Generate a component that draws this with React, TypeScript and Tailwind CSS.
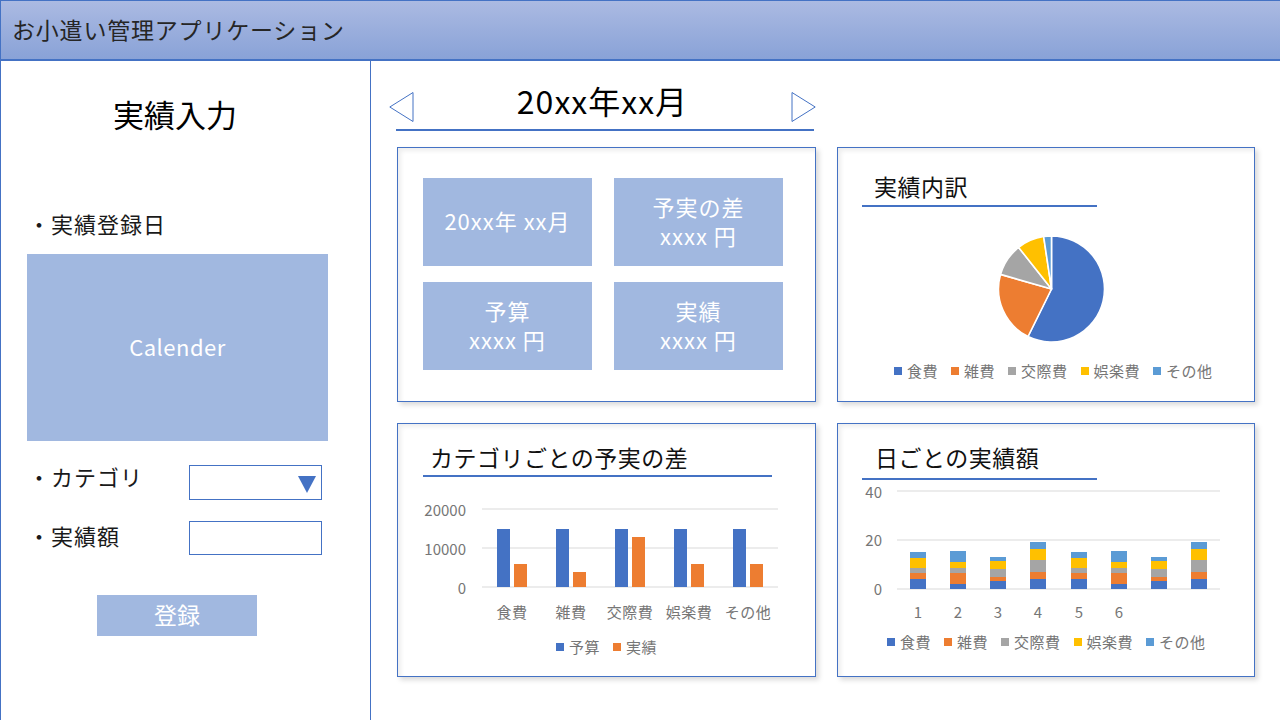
import type { ReactNode } from 'react';

const C = {
  blue: '#4472c4',
  orange: '#ed7d31',
  gray: '#a5a5a5',
  yellow: '#ffc000',
  sky: '#5b9bd5',
  axis: '#767676',
  grid: '#d9d9d9',
};

const CATS = ['食費', '雑費', '交際費', '娯楽費', 'その他'];

function slice(cx: number, cy: number, r: number, a0: number, a1: number) {
  const rad = (a: number) => ((a - 90) * Math.PI) / 180;
  const x0 = cx + r * Math.cos(rad(a0));
  const y0 = cy + r * Math.sin(rad(a0));
  const x1 = cx + r * Math.cos(rad(a1));
  const y1 = cy + r * Math.sin(rad(a1));
  const large = a1 - a0 > 180 ? 1 : 0;
  return `M ${cx} ${cy} L ${x0} ${y0} A ${r} ${r} 0 ${large} 1 ${x1} ${y1} Z`;
}

function Legend({ items, className }: { items: { label: string; color: string }[]; className: string }) {
  return (
    <div className={`flex h-[20px] items-center gap-[13px] text-[15px] leading-[20px] tracking-[0.5px] text-[#767676] ${className}`}>
      {items.map((it) => (
        <div key={it.label} className="flex items-center gap-[5px]">
          <span className="block h-[8px] w-[8px]" style={{ backgroundColor: it.color }} />
          <span>{it.label}</span>
        </div>
      ))}
    </div>
  );
}

function Card({ children, className = '' }: { children: ReactNode; className?: string }) {
  return (
    <div
      className={`border border-[#4472c4] bg-white shadow-[inset_3px_3px_4px_rgba(0,0,0,0.07),3px_3px_5px_rgba(0,0,0,0.15)] ${className}`}
    >
      {children}
    </div>
  );
}

function CardTitle({ text, ml, pl, width, gap }: { text: string; ml: string; pl: string; width: string; gap: string }) {
  return (
    <div className={`${ml} ${width}`}>
      <div className={`h-[30px] text-[23px] leading-[30px] tracking-[0.5px] text-[#111] ${pl}`}>{text}</div>
      <div className={`h-[2px] bg-[#4472c4] ${gap}`} />
    </div>
  );
}

function Tile({ lines }: { lines: string[] }) {
  return (
    <div className="flex h-[88px] w-[169px] flex-col items-center justify-center pb-[3px] text-[22px] leading-[29px] tracking-[1px] text-white bg-[#a1b8e0]">
      {lines.map((l) => (
        <span key={l}>{l}</span>
      ))}
    </div>
  );
}

function SummaryCard() {
  return (
    <Card className="pl-[25px] pt-[30px]">
      <div className="grid grid-cols-[169px_169px] gap-x-[22px] gap-y-[16px]">
        <Tile lines={['20xx年 xx月']} />
        <Tile lines={['予実の差', 'xxxx 円']} />
        <Tile lines={['予算', 'xxxx 円']} />
        <Tile lines={['実績', 'xxxx 円']} />
      </div>
    </Card>
  );
}

function PieCard() {
  const cx = 1051.5;
  const cy = 290;
  const r = 53;
  const parts = [
    { a0: 0, a1: 206.3, color: C.blue },
    { a0: 206.3, a1: 286, color: C.orange },
    { a0: 286, a1: 321.7, color: C.gray },
    { a0: 321.7, a1: 351.5, color: C.yellow },
    { a0: 351.5, a1: 360, color: C.sky },
  ];
  return (
    <Card className="pt-[23px]">
      <CardTitle text="実績内訳" ml="ml-[24px]" pl="pl-[12px]" width="w-[235px]" gap="mt-[4px]" />
      <svg width="416" height="112" className="mt-[26px] block">
        <g transform="translate(-838,-234)">
          {parts.map((p) => (
            <path key={p.color} d={slice(cx, cy, r, p.a0, p.a1)} fill={p.color} stroke="#fff" strokeWidth="1.6" strokeLinejoin="round" />
          ))}
        </g>
      </svg>
      <Legend
        className="mt-[16px] pl-[56px]"
        items={[
          { label: '食費', color: C.blue },
          { label: '雑費', color: C.orange },
          { label: '交際費', color: C.gray },
          { label: '娯楽費', color: C.yellow },
          { label: 'その他', color: C.sky },
        ]}
      />
    </Card>
  );
}

function DiffCard() {
  const actual = [565, 573, 538, 565, 565];
  return (
    <Card className="pt-[18px]">
      <CardTitle text="カテゴリごとの予実の差" ml="ml-[25px]" pl="pl-[7px]" width="w-[349px]" gap="mt-[3px]" />
      <svg width="416" height="130" className="mt-[17px] block">
        <g transform="translate(-398,-495)" fontSize="15" fill={C.axis}>
          {[510, 549, 588].map((y) => (
            <line key={y} x1="482" x2="778" y1={y} y2={y} stroke={C.grid} strokeWidth="1" />
          ))}
          {[
            ['20000', 510],
            ['10000', 549],
            ['0', 588],
          ].map(([t, y]) => (
            <text key={t} x="466" y={y} textAnchor="end" dominantBaseline="central">
              {t}
            </text>
          ))}
          {CATS.map((c, i) => {
            const x = 497 + 59 * i;
            return (
              <g key={c}>
                <rect x={x} y={530} width="13" height={588 - 530} fill={C.blue} />
                <rect x={x + 17} y={actual[i]} width="13" height={588 - actual[i]} fill={C.orange} />
                <text x={x + 15} y="612" textAnchor="middle" dominantBaseline="central" letterSpacing="0.5">
                  {c}
                </text>
              </g>
            );
          })}
        </g>
      </svg>
      <Legend
        className="mt-[13px] pl-[158px]"
        items={[
          { label: '予算', color: C.blue },
          { label: '実績', color: C.orange },
        ]}
      />
    </Card>
  );
}

function DailyCard() {
  const xs = [910, 950, 990, 1030, 1071, 1111, 1151, 1191];
  const patterns = [
    [10, 6, 5, 10, 6],
    [5, 11, 5, 6, 11],
    [8, 4, 8, 8, 4],
    [10, 7, 12, 11, 7],
  ];
  const colors = [C.blue, C.orange, C.gray, C.yellow, C.sky];
  return (
    <Card className="pt-[18px]">
      <CardTitle text="日ごとの実績額" ml="ml-[24px]" pl="pl-[13px]" width="w-[235px]" gap="mt-[6px]" />
      <svg width="416" height="143" className="mt-[1px] block">
        <g transform="translate(-838,-482)" fontSize="15" fill={C.axis}>
          {[492, 541, 590].map((y) => (
            <line key={y} x1="897" x2="1220" y1={y} y2={y} stroke={C.grid} strokeWidth="1" />
          ))}
          {[
            ['40', 492],
            ['20', 540],
            ['0', 589],
          ].map(([t, y]) => (
            <text key={t} x="882" y={y} textAnchor="end" dominantBaseline="central">
              {t}
            </text>
          ))}
          {xs.map((x, i) => {
            let top = 590;
            return (
              <g key={x}>
                {patterns[i % 4].map((h, j) => {
                  top -= h;
                  return <rect key={j} x={x} y={top} width="16" height={h} fill={colors[j]} />;
                })}
                {i < 6 && (
                  <text x={x + 8} y="612" textAnchor="middle" dominantBaseline="central">
                    {i + 1}
                  </text>
                )}
              </g>
            );
          })}
        </g>
      </svg>
      <Legend
        className="mt-[8px] pl-[49px]"
        items={[
          { label: '食費', color: C.blue },
          { label: '雑費', color: C.orange },
          { label: '交際費', color: C.gray },
          { label: '娯楽費', color: C.yellow },
          { label: 'その他', color: C.sky },
        ]}
      />
    </Card>
  );
}

function Sidebar() {
  return (
    <aside className="flex w-[371px] flex-col border-x border-[#4472c4] pl-[26px] text-[#1a1a1a]">
      <h2 className="ml-[86px] mt-[33px] h-[40px] text-[31px] leading-[40px] text-black">実績入力</h2>
      <div className="ml-[1px] mt-[74px] h-[30px] text-[22px] leading-[30px] tracking-[1px]">・実績登録日</div>
      <div className="mt-[16px] flex h-[187px] w-[301px] items-center justify-center pb-[2px] text-[22px] tracking-[0.5px] text-white bg-[#a1b8e0]">
        Calender
      </div>
      <div className="mt-[24px] flex items-start">
        <div className="ml-[1px] w-[161px] text-[22px] leading-[22px] tracking-[1px]">・カテゴリ</div>
        <div className="flex h-[35px] w-[133px] items-start justify-end border border-[#4472c4] pr-[5px] pt-[10px]">
          <svg width="18" height="17" viewBox="0 0 18 17">
            <polygon points="0,0 18,0 9,17" fill="#4472c4" />
          </svg>
        </div>
      </div>
      <div className="mt-[21px] flex items-start">
        <div className="ml-[1px] w-[161px] text-[22px] leading-[28px] tracking-[1px]">・実績額</div>
        <div className="h-[34px] w-[133px] border border-[#4472c4]" />
      </div>
      <button className="ml-[70px] mt-[40px] flex h-[41px] w-[160px] items-center justify-center pb-[3px] text-[23px] text-white bg-[#a1b8e0]">
        登録
      </button>
    </aside>
  );
}

function Arrow({ dir }: { dir: 'left' | 'right' }) {
  return (
    <svg width="25" height="30" viewBox="0 0 25 30">
      <polygon
        points={dir === 'left' ? '24,0.5 24,29.5 0.8,15' : '1,0.5 1,29.5 24.2,15'}
        fill="#fff"
        stroke="#4472c4"
        strokeWidth="1"
      />
    </svg>
  );
}

export default function App() {
  return (
    <div className="flex h-[720px] w-[1280px] flex-col overflow-hidden bg-white font-['Noto_Sans_CJK_JP','Noto_Sans',sans-serif]">
      <header className="flex h-[61px] shrink-0 items-center border-l border-t border-b-2 border-[#4472c4] bg-linear-to-b from-[#abbae2] to-[#89a2d7] pb-[2px] pl-[11px]">
        <h1 className="text-[23px] tracking-[0.8px] text-[#262626]">お小遣い管理アプリケーション</h1>
      </header>
      <div className="flex min-h-0 flex-1">
        <Sidebar />
        <main className="flex flex-col pl-[18px] pt-[31px]">
          <div className="flex h-[30px] w-[427px] items-start justify-between">
            <Arrow dir="left" />
            <div className="text-[32px] leading-[16px] tracking-[1px] text-black">20xx年xx月</div>
            <Arrow dir="right" />
          </div>
          <div className="ml-[7px] mt-[7px] h-[2px] w-[418px] bg-[#4472c4]" />
          <div className="ml-[8px] mt-[16px] grid grid-cols-[419px_418px] grid-rows-[255px_254px] gap-x-[21px] gap-y-[21px]">
            <SummaryCard />
            <PieCard />
            <DiffCard />
            <DailyCard />
          </div>
        </main>
      </div>
    </div>
  );
}
